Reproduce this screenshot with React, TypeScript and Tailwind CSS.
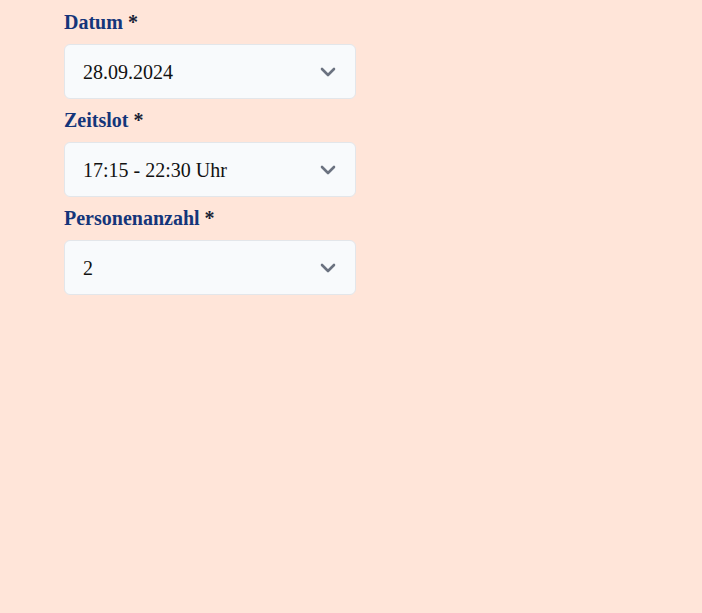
import React from "react";

const fields = [
  { label: "Datum", value: "28.09.2024" },
  { label: "Zeitslot", value: "17:15 - 22:30 Uhr" },
  { label: "Personenanzahl", value: "2" },
];

function Chevron() {
  return (
    <svg width="16" height="10" viewBox="0 0 16 10" fill="none" className="shrink-0">
      <path d="M2 2 L8 8 L14 2" stroke="#6b7280" strokeWidth="2.6" strokeLinecap="round" strokeLinejoin="round" />
    </svg>
  );
}

export default function App() {
  return (
    <div
      className="min-h-[613px] w-full bg-[#ffe5d9] pt-[8px] pl-[64px]"
      style={{ fontFamily: '"Liberation Serif", "Times New Roman", serif' }}
    >
      <div className="flex w-[292px] flex-col gap-[7px]">
        {fields.map((f) => (
          <div key={f.label} className="flex flex-col">
            <label className="mb-2 h-[28px] text-[20px] leading-[28px] font-bold text-[#14357a]">
              {f.label} <span className="text-[#1a1f36]">*</span>
            </label>
            <div className="flex h-[55px] items-center justify-between rounded-md border border-[#e3e6ea] bg-[#f8fafc] pl-[18px] pr-[19px]">
              <span className="text-[20px] leading-none text-[#111111]">{f.value}</span>
              <Chevron />
            </div>
          </div>
        ))}
      </div>
    </div>
  );
}
